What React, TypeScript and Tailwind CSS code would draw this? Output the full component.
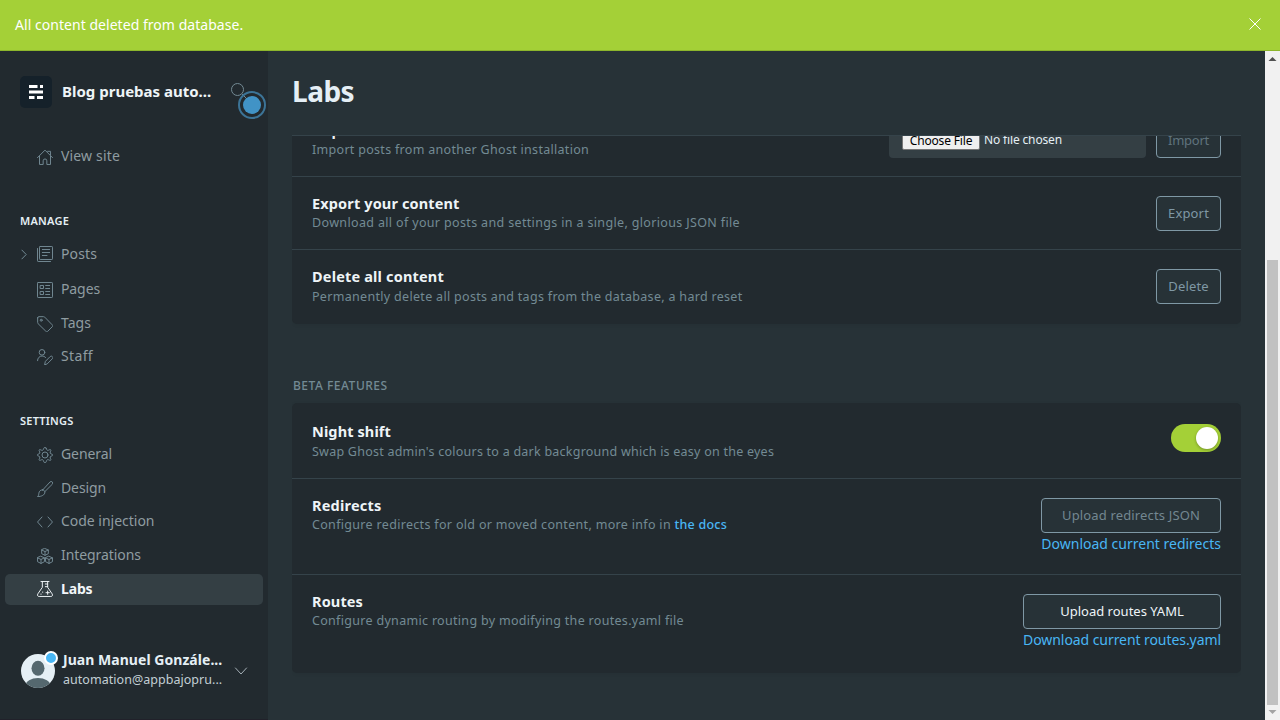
import type { ReactNode } from 'react';

function Icon({ children, className = '' }: { children: ReactNode; className?: string }) {
  return (
    <svg
      viewBox="0 0 24 24"
      fill="none"
      stroke="currentColor"
      strokeWidth="1.45"
      strokeLinecap="round"
      strokeLinejoin="round"
      className={`h-4 w-4 shrink-0 ${className}`}
    >
      {children}
    </svg>
  );
}

const HomeIcon = (
  <>
    <path d="M.7 13 12 1.7 23.3 13" />
    <path d="M3.750 11V23.200h5.500v-5.500a2.750 2.750 0 0 1 5.500 0v5.500h5.500V11" />
    <path d="M16 3.500h4.300V9" />
  </>
);

const PostsIcon = (
  <>
    <rect x="3.750" y=".75" width="19.500" height="19.500" rx="1" />
    <path d="M.75 3.750v18.500a1 1 0 0 0 1 1h18.500" />
    <path d="M8 5.250h11M8 9.750h11M8 14.250h7" />
  </>
);

const PagesIcon = (
  <>
    <rect x=".75" y=".75" width="22.500" height="22.500" rx="1" />
    <rect x="5.250" y="5.250" width="4.500" height="4.500" />
    <rect x="5.250" y="14.250" width="4.500" height="4.500" />
    <path d="M13 5.250h6M13 9.750h6M13 14.250h6M13 18.750h6" />
  </>
);

const TagIcon = (
  <>
    <path d="M1 2.800v7c0 .7.200 1.300.7 1.800l11.500 11.200c.9.900 2.200.9 3 0l6.600-6.600c.9-.9.900-2.200 0-3L11.600 1.700A2.500 2.500 0 0 0 9.800 1H2.800A1.800 1.800 0 0 0 1 2.800z" />
    <circle cx="6.300" cy="6.300" r="1.500" />
  </>
);

const StaffIcon = (
  <>
    <circle cx="7.500" cy="5" r="4.200" />
    <path d="M.8 17.500c0-4 3-7 6.800-7 2.100 0 4 .9 5.300 2.300" />
    <path d="m11.500 23.200 1.100-4.700 7.200-7.200a2.300 2.300 0 0 1 3.200 3.300l-7.300 7.300z" />
  </>
);

const GearIcon = (
  <>
    <circle cx="12" cy="12" r="4.500" />
    <path d="M13.700 1.800l.7 1.800a2.200 2.200 0 0 0 3 1.200l1.800-.8a1.100 1.100 0 0 1 1.500 1.500l-.8 1.800a2.200 2.200 0 0 0 1.200 3l1.800.7a1.100 1.100 0 0 1 0 2.100l-1.800.7a2.200 2.200 0 0 0-1.200 3l.8 1.700a1.100 1.100 0 0 1-1.500 1.500l-1.800-.8a2.200 2.200 0 0 0-3 1.200l-.7 1.900a1.800 1.800 0 0 1-3.400 0l-.7-1.900a2.200 2.200 0 0 0-3-1.200l-1.800.8a1.100 1.100 0 0 1-1.500-1.500l.8-1.700a2.200 2.200 0 0 0-1.200-3l-1.800-.7a1.100 1.100 0 0 1 0-2.100l1.800-.7a2.200 2.200 0 0 0 1.200-3l-.8-1.800A1.100 1.100 0 0 1 4.800 4l1.800.8a2.200 2.200 0 0 0 3-1.200l.7-1.800a1.800 1.800 0 0 1 3.400 0z" />
  </>
);

const BrushIcon = (
  <>
    <path d="M8.500 13.500 19.500 1.500a2.400 2.400 0 0 1 3.500 3.300L11.500 16.200" />
    <path d="M8.500 13.300c2 .3 3.200 1.600 3.300 3.500 0 4.200-5.300 6.700-11 6.500 1.800-1.400 1.800-3 2-5 .2-2.800 2.800-5.400 5.700-5z" />
  </>
);

const CodeIcon = <path d="M7.500 4.500.8 12l6.700 7.500M16.500 4.500l6.700 7.500-6.700 7.500" />;

const CubesIcon = (
  <>
    <path d="M12 .8 17 3v5.500L12 11 7 8.500V3zM7 3 12 5.300 17 3M12 5.300V11" />
    <path d="M6 12.500l5.200 2.300v5.700L6 23.200.8 20.500v-5.700zM.8 14.800 6 17.200l5.200-2.400M6 17.200v6" />
    <path d="M18 12.500l5.200 2.300v5.700L18 23.200l-5.200-2.700v-5.700zM12.800 14.800l5.200 2.400 5.200-2.400M18 17.200v6" />
  </>
);

const FlaskIcon = (
  <>
    <path d="M6 .8h12M8 .8v8.700L1.300 19.300C0 21.500 1 23.200 3.300 23.200h17.400c2.300 0 3.300-1.700 2-3.900L16 9.500V.8" />
    <path d="M12.500 4.500H16M12.500 8.500H16" />
    <path d="M16 15v5M13.500 17.500h5M8.500 16.500v.5M6 19.500v.5" />
  </>
);

interface NavItem {
  label: string;
  icon: ReactNode;
  box: string;
  text: string;
  iconPos?: string;
}

const manageItems: NavItem[] = [
  { label: 'Posts', icon: PostsIcon, box: 'mb-1', text: 'tracking-[0.12px]', iconPos: 'mt-[7px]' },
  { label: 'Pages', icon: PagesIcon, box: 'mb-[3px]', text: 'tracking-[-0.1px]' },
  { label: 'Tags', icon: TagIcon, box: 'mb-[2px]', text: 'tracking-[0.04px]' },
  { label: 'Staff', icon: StaffIcon, box: '', text: 'tracking-[0.35px]' },
];

const settingsItems: NavItem[] = [
  { label: 'General', icon: GearIcon, box: 'mb-[3px]', text: 'tracking-[-0.08px]' },
  { label: 'Design', icon: BrushIcon, box: 'mb-[2px]', text: 'tracking-[-0.1px]' },
  { label: 'Code injection', icon: CodeIcon, box: 'mb-[3px]', text: 'tracking-[-0.02px]' },
  { label: 'Integrations', icon: CubesIcon, box: 'mb-[3px]', text: 'tracking-[-0.07px]' },
];

function NavRow({ item, expandable = false }: { item: NavItem; expandable?: boolean }) {
  return (
    <a className={`flex h-[31px] pl-4 text-[#8f9ca1] ${item.box}`}>
      <span className="w-4 pt-[10px] text-[#738a94]">
        {expandable && (
          <svg viewBox="0 0 6 11" fill="none" stroke="currentColor" className="h-[11px] w-[6px]">
            <path d="m.6.800 4.600 4.700-4.600 4.700" />
          </svg>
        )}
      </span>
      <Icon className={`text-[#738a94] ${item.iconPos ?? 'mt-2'}`}>{item.icon}</Icon>
      <span className={`ml-2 text-[14px] leading-[30px] ${item.text}`}>{item.label}</span>
    </a>
  );
}

function Sidebar() {
  return (
    <aside className="flex w-[268px] shrink-0 flex-col border-b border-[#21212a] bg-[#222a2f] pl-[5px] pr-[5px]">
      <header className="relative mt-[25px] flex h-8 pl-[15px]">
        <div className="flex h-8 w-8 items-center justify-center rounded-[5px] bg-[#15212a]">
          <svg viewBox="0 0 14 14" fill="#fff" className="h-[14px] w-[14px]">
            <path d="M0 0h8.500v3H0zM11 0h3v3h-3zM0 5.500h14v3H0zM0 11h5.500v3H0zM8 11h6v3H8z" />
          </svg>
        </div>
        <h2 className="ml-[10px] text-[15px] font-bold leading-[31px] text-[#eef4f7]">Blog pruebas auto...</h2>
        <svg viewBox="0 0 18 18" fill="none" stroke="#738a94" className="absolute left-[226px] top-[7px] h-[18px] w-[18px]">
          <circle cx="6.500" cy="6.500" r="6" />
          <path d="m11 11 6 6" />
        </svg>
        <span className="absolute left-[233px] top-[15px] flex h-[28px] w-[28px] items-center justify-center rounded-full border-2 border-[#3c7497]">
          <span className="h-[18px] w-[18px] rounded-full bg-[#4193c6]" />
        </span>
      </header>

      <nav className="flex flex-col">
        <a className="mt-[33px] flex h-[31px] pl-8 text-[#8f9ca1]">
          <Icon className="mt-2 text-[#738a94]">{HomeIcon}</Icon>
          <span className="ml-2 text-[14px] leading-[30px] tracking-[0.16px]">View site</span>
        </a>
        <h3 className="mt-10 h-[18px] pl-[15px] text-[11px] font-semibold leading-[18px] tracking-[0.23px] text-[#e5eff5]">
          MANAGE
        </h3>
        <div className="mt-[9px] flex flex-col">
          {manageItems.map((item, i) => (
            <NavRow key={item.label} item={item} expandable={i === 0} />
          ))}
        </div>
        <h3 className="mt-10 h-[18px] pl-[15px] text-[11px] font-semibold leading-[18px] tracking-[0.22px] text-[#e5eff5]">
          SETTINGS
        </h3>
        <div className="mt-[9px] flex flex-col">
          {settingsItems.map((item) => (
            <NavRow key={item.label} item={item} />
          ))}
          <a className="flex h-[31px] rounded-[5px] bg-[#343f44] pl-8 text-[#f2f7fa]">
            <Icon className="mt-[7px]">{FlaskIcon}</Icon>
            <span className="ml-2 text-[14px] font-bold leading-[30px] tracking-[-0.15px]">Labs</span>
          </a>
        </div>
      </nav>

      <footer className="mt-[45px] flex pl-4">
        <div className="relative mt-1 h-[34px] w-[34px]">
          <svg viewBox="0 0 34 34" className="h-[34px] w-[34px]">
            <defs>
              <clipPath id="avatar">
                <circle cx="17" cy="17" r="17" />
              </clipPath>
            </defs>
            <g clipPath="url(#avatar)">
              <rect width="34" height="34" fill="#e5eff5" />
              <ellipse cx="17" cy="14.300" rx="6.500" ry="7.500" fill="#55686f" />
              <ellipse cx="17" cy="31.500" rx="12.500" ry="7.500" fill="#55686f" />
            </g>
          </svg>
          <span className="absolute -top-[3px] left-[23px] h-[14px] w-[14px] rounded-full border-2 border-white bg-[#49b6f4]" />
        </div>
        <div className="ml-2 w-[164px]">
          <div className="h-[21px] whitespace-nowrap text-[14px] font-bold leading-[19px] tracking-[0.04px] text-[#e5eff5]">
            Juan Manuel Gonzále...
          </div>
          <div className="whitespace-nowrap text-[12.5px] leading-[18px] tracking-[0.04px] text-[#c3cfd5]">
            automation@appbajopru...
          </div>
        </div>
        <svg viewBox="0 0 14 8" fill="none" stroke="#b4c0c6" strokeWidth=".9" className="ml-[7px] mt-[17px] h-2 w-[14px]">
          <path d="m1.200.700 5.800 6.300L12.800.700" />
        </svg>
      </footer>
    </aside>
  );
}

function Button({ children, className }: { children: ReactNode; className: string }) {
  return (
    <button
      className={`flex h-[35px] items-center justify-center whitespace-nowrap rounded-[4px] border border-[#7f98a5] bg-[#273237] pb-[2px] text-[13px] leading-[20px] ${className}`}
    >
      {children}
    </button>
  );
}

function Setting({
  title,
  text,
  titleTracking,
  textTracking,
  row,
  copy = 'pt-4',
  children,
}: {
  title: string;
  text: ReactNode;
  titleTracking: string;
  textTracking: string;
  row: string;
  copy?: string;
  children: ReactNode;
}) {
  return (
    <div className={`flex shrink-0 justify-between px-5 ${row}`}>
      <div className={`flex flex-col ${copy}`}>
        <h4 className={`h-[21px] text-[14.5px] font-bold leading-5 text-[#eef4f7] ${titleTracking}`}>{title}</h4>
        <p className={`h-[18px] whitespace-nowrap text-[12.5px] leading-[18px] text-[#738a94] ${textTracking}`}>{text}</p>
      </div>
      {children}
    </div>
  );
}

const divider = 'border-b border-[#35434a]';

function Main() {
  return (
    <main className="flex min-w-0 flex-1 flex-col bg-[#273237] px-6">
      <h1 className="h-[84px] pt-5 text-[28px] font-bold leading-10 tracking-[-0.5px] text-[#e5eff5]">Labs</h1>
      <div className="flex min-h-0 flex-1 flex-col overflow-hidden border-t border-[#35434a]">
        <section className="-mt-8 flex shrink-0 flex-col rounded-[5px] bg-[#222a2f] shadow-[0_1px_4px_rgba(0,0,0,0.06)]">
          <Setting
            title="Import content"
            text="Import posts from another Ghost installation"
            titleTracking="tracking-[-0.1px]"
            textTracking="tracking-[0.3px]"
            row={`h-[73px] ${divider}`}
          >
            <div className="mt-[19px] flex gap-[10px]">
              <div className="flex h-[35px] w-[257px] rounded-[4px] bg-[#343f44] pl-[13px] pt-2">
                <span className="flex h-[19px] w-[78px] items-center justify-center rounded-[2px] border border-[#767676] bg-[#efefef] pb-px text-[12px] leading-[17px] tracking-[-0.17px] text-black">
                  Choose File
                </span>
                <span className="ml-1 h-[19px] text-[12px] leading-[18px] tracking-[-0.15px] text-[#e5eff5]">No file chosen</span>
              </div>
              <Button className="w-[65px] tracking-[-0.25px] text-[#5f737d]">Import</Button>
            </div>
          </Setting>
          <Setting
            title="Export your content"
            text="Download all of your posts and settings in a single, glorious JSON file"
            titleTracking="tracking-[0.135px]"
            textTracking="tracking-[0.35px]"
            row={`h-[73px] ${divider}`}
          >
            <Button className="mt-[19px] w-[65px] tracking-[0.16px] text-[#7f98a5]">Export</Button>
          </Setting>
          <Setting
            title="Delete all content"
            text="Permanently delete all posts and tags from the database, a hard reset"
            titleTracking="tracking-[0.18px]"
            textTracking="tracking-[0.31px]"
            row="h-[74px]"
            copy="gap-px pt-4"
          >
            <Button className="mt-[19px] w-[65px] tracking-[0.16px] text-[#7f98a5]">Delete</Button>
          </Setting>
        </section>

        <h3 className="mt-[53px] h-[26px] shrink-0 pl-px text-[12px] font-medium leading-[18px] tracking-[0.52px] text-[#738a94]">
          BETA FEATURES
        </h3>

        <section className="flex shrink-0 flex-col rounded-[5px] bg-[#222a2f] shadow-[0_1px_4px_rgba(0,0,0,0.06)]">
          <Setting
            title="Night shift"
            text="Swap Ghost admin's colours to a dark background which is easy on the eyes"
            titleTracking="tracking-[0.115px]"
            textTracking="tracking-[0.24px]"
            row={`h-[76px] ${divider}`}
            copy="gap-px pt-[18px]"
          >
            <div className="mt-[21px] flex h-7 w-[50px] items-center justify-end rounded-full bg-[#a4d037] pr-[3px]">
              <span className="h-[22px] w-[22px] rounded-full bg-white shadow-[0_1px_3px_rgba(0,0,0,0.3)]" />
            </div>
          </Setting>
          <Setting
            title="Redirects"
            text={
              <>
                Configure redirects for old or moved content, more info in{' '}
                <a className="font-medium tracking-[0.22px] text-[#49b6f4]">the docs</a>
              </>
            }
            titleTracking="tracking-[0.21px]"
            textTracking="tracking-[0.32px]"
            row={`h-24 ${divider}`}
          >
            <div className="mt-[19px] flex flex-col items-end">
              <Button className="w-[180px] tracking-[0.15px] text-[#738791]">Upload redirects JSON</Button>
              <a className="text-[14px] leading-[22px] text-[#49b6f4]">Download current redirects</a>
            </div>
          </Setting>
          <Setting
            title="Routes"
            text="Configure dynamic routing by modifying the routes.yaml file"
            titleTracking="tracking-[0.13px]"
            textTracking="tracking-[0.31px]"
            row="h-[98px]"
          >
            <div className="mt-[19px] flex flex-col items-end">
              <Button className="w-[198px] text-[#eef4f7]">Upload routes YAML</Button>
              <a className="text-[14px] leading-[22px] tracking-[-0.07px] text-[#49b6f4]">Download current routes.yaml</a>
            </div>
          </Setting>
        </section>
      </div>
    </main>
  );
}

function Scrollbar() {
  return (
    <div className="flex w-[15px] shrink-0 flex-col items-center justify-between bg-[#f1f1f1]">
      <svg viewBox="0 0 15 15" className="h-[15px] w-[15px]">
        <path d="M3.500 10h8L7.500 6z" fill="#505050" />
      </svg>
      <div className="mt-auto h-[445px] w-[11px] bg-[#c1c1c1]" />
      <svg viewBox="0 0 15 15" className="h-[15px] w-[15px]">
        <path d="M3.500 5h8l-4 4z" fill="#a3a3a3" />
      </svg>
    </div>
  );
}

export default function App() {
  return (
    <div className="flex h-[720px] w-[1280px] flex-col overflow-hidden font-['Noto_Sans',sans-serif]">
      <div className="flex h-[51px] shrink-0 justify-between border-b border-[#8db62c] bg-[#a4d037] pl-[15px] pr-[19px]">
        <p className="pt-px text-[14px] leading-[48px] tracking-[0.04px] text-white">All content deleted from database.</p>
        <svg viewBox="0 0 12 12" fill="none" stroke="#fff" className="mt-[18px] h-3 w-3">
          <path d="m.5.500 11 11M11.500.500l-11 11" />
        </svg>
      </div>
      <div className="flex min-h-0 flex-1">
        <Sidebar />
        <Main />
        <Scrollbar />
      </div>
    </div>
  );
}
